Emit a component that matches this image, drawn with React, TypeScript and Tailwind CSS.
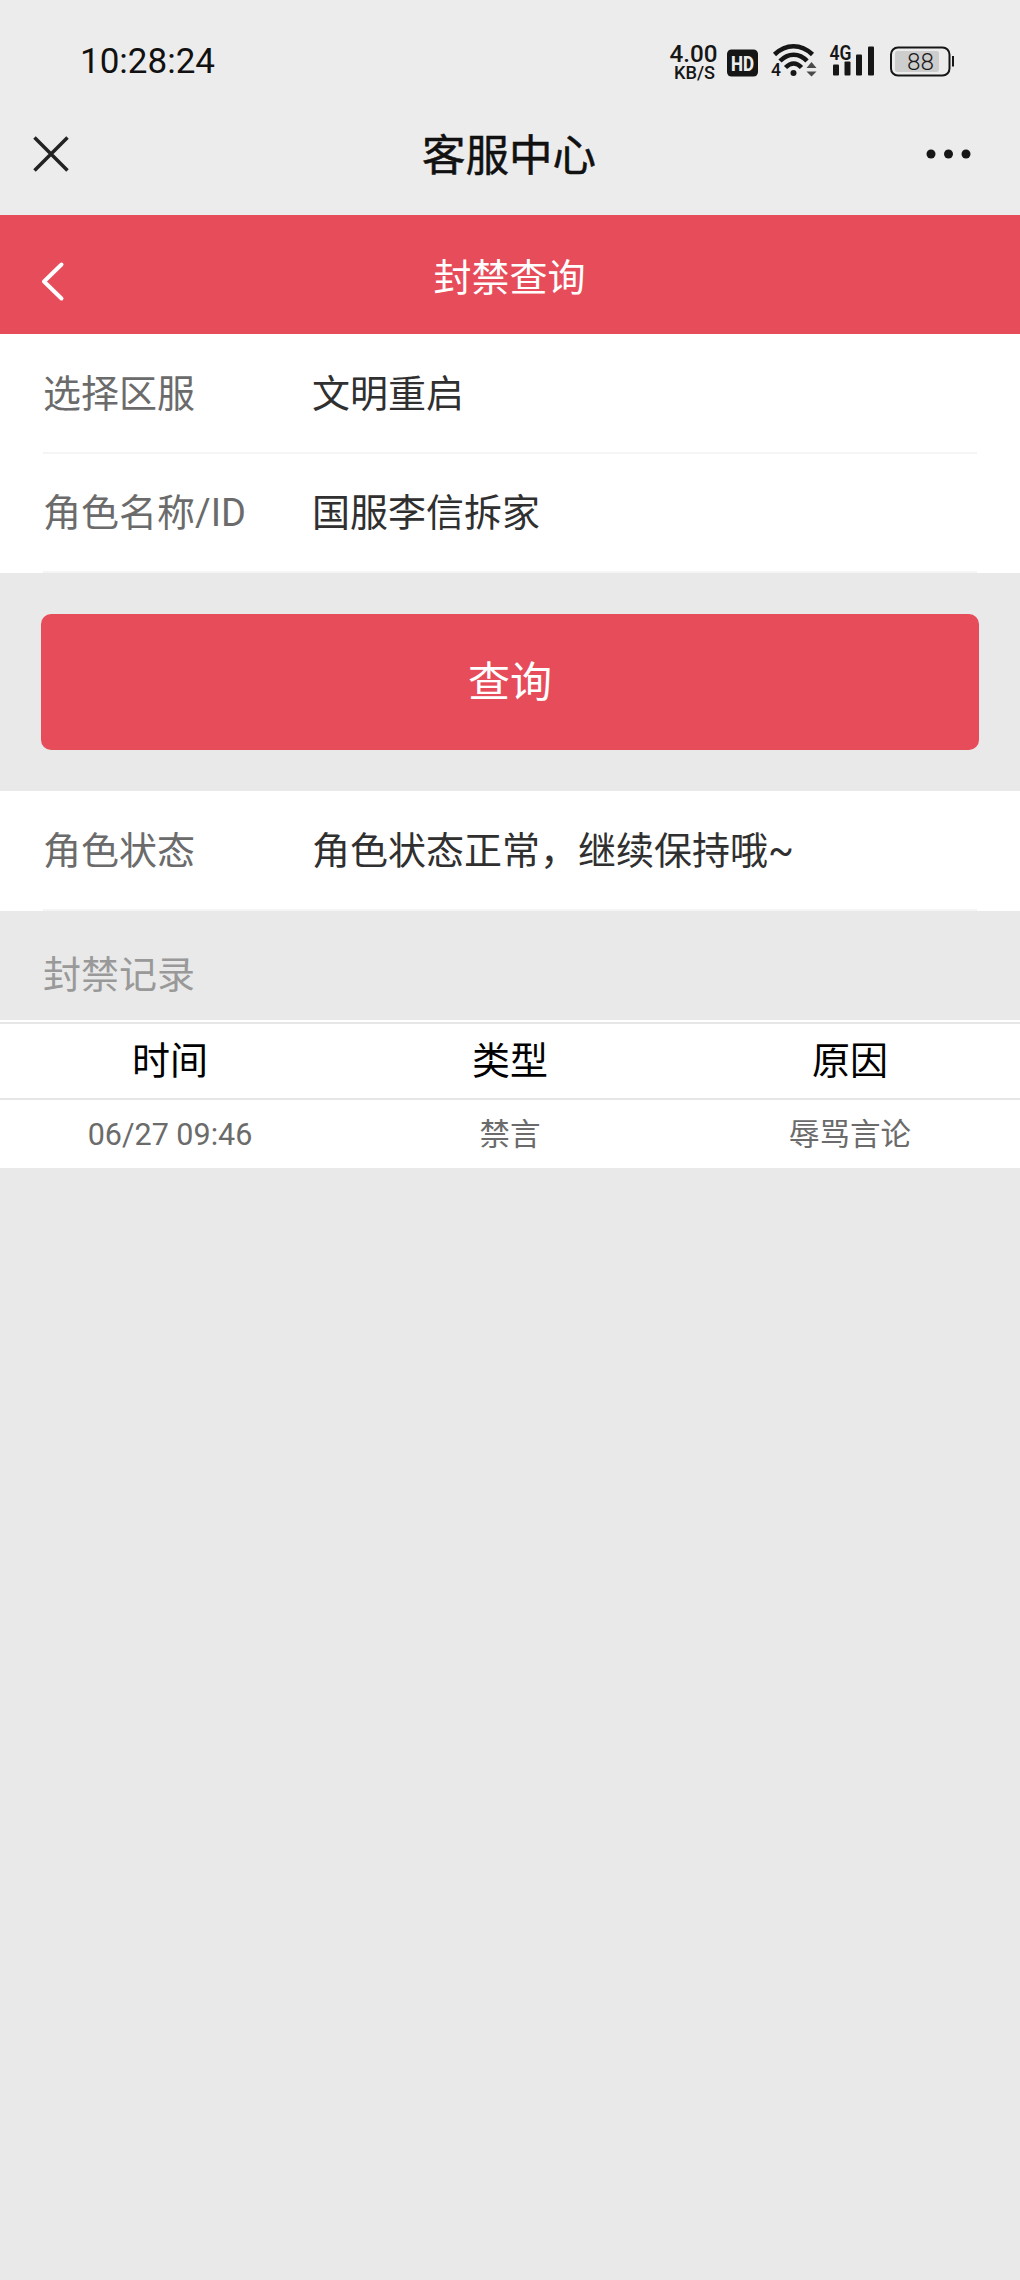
import type { ReactNode } from 'react';

interface BanRecord {
  time: string;
  type: string;
  reason: string;
}

const records: BanRecord[] = [{ time: '06/27 09:46', type: '禁言', reason: '辱骂言论' }];

function NetSpeed() {
  return (
    <div className="flex w-[52px] shrink-0 flex-col items-center font-medium text-[#161616]">
      <svg width="52" height="22" viewBox="0 0 52 22" className="overflow-visible" fill="currentColor">
        <text x="0.500" y="21" fontSize="23" textLength="48" lengthAdjust="spacingAndGlyphs">4.00</text>
      </svg>
      <svg width="52" height="18" viewBox="0 0 52 18" className="overflow-visible" fill="currentColor">
        <text x="5" y="15.500" fontSize="17.500" textLength="41" lengthAdjust="spacingAndGlyphs">KB/S</text>
      </svg>
    </div>
  );
}

function HdBadge() {
  return (
    <svg width="31" height="40" viewBox="0 0 31 40" className="shrink-0 overflow-visible">
      <rect x="0" y="8.500" width="31" height="27" rx="4.500" fill="#161616" />
      <text x="4" y="29.500" fontSize="21" fontWeight="800" fill="#ececec" textLength="23" lengthAdjust="spacingAndGlyphs">HD</text>
    </svg>
  );
}

function WifiIcon() {
  return (
    <svg width="46" height="40" viewBox="0 0 46 40" className="shrink-0 overflow-visible" fill="#161616">
      <g fill="none" stroke="#161616" strokeWidth="4.500">
        <path d="M2.500 13.500C14 2.500 29 2.500 40.500 13.500" />
        <path d="M8 20C16 11.500 27.500 11.500 35 20" />
        <path d="M13.500 26.500C19 21 24.500 21 29.500 26.500" />
      </g>
      <circle cx="21.500" cy="32" r="3" />
      <text x="-1" y="34.500" fontSize="17.500" fontWeight="500">4</text>
      <path d="M39.500 21l5 6h-10zM39.500 35.500l-5-5h10z" fill="#4a4a4a" />
    </svg>
  );
}

function SignalIcon() {
  return (
    <svg width="46" height="40" viewBox="0 0 46 40" className="shrink-0 overflow-visible" fill="#161616">
      <text x="-0.500" y="18.500" fontSize="19.500" fontWeight="600" textLength="22" lengthAdjust="spacingAndGlyphs">4G</text>
      <rect x="3" y="23.500" width="6" height="11" rx="1" />
      <rect x="14.500" y="20.500" width="6" height="14" rx="1" />
      <rect x="26" y="13.500" width="6" height="21" rx="1" />
      <rect x="38" y="5.500" width="6" height="29" rx="1" />
    </svg>
  );
}

function BatteryIcon() {
  return (
    <svg width="66" height="40" viewBox="0 0 66 40" className="shrink-0">
      <rect x="1" y="6.500" width="58.500" height="28" rx="7" fill="none" stroke="#161616" strokeWidth="2" />
      <rect x="5" y="10" width="44" height="21" rx="2.500" fill="#cdcdcd" />
      <text x="17" y="29" fontSize="24" fontWeight="300" fill="#1c1c1c" textLength="27" lengthAdjust="spacingAndGlyphs">88</text>
      <rect x="62" y="15" width="2" height="10.500" fill="#161616" />
    </svg>
  );
}

function InfoRow({ label, children }: { label: string; children: ReactNode }) {
  return (
    <div className="bg-white px-[43px]">
      <div className="flex h-[119.500px] items-center border-b-2 border-[#f5f5f5] pt-0.5 text-[38px] leading-none">
        <span className="w-[269px] shrink-0 text-[#6b6b6b]">{label}</span>
        <span className="text-[#303030]">{children}</span>
      </div>
    </div>
  );
}

export default function App() {
  return (
    <div className="min-h-[2280px] w-[1020px] bg-[#e9e9e9] font-[Roboto,'Noto_Sans_CJK_SC',sans-serif]">
      {/* Status bar and page title */}
      <header className="h-[215px] bg-[#ececec]">
        <div className="flex h-[121px] items-center justify-between pr-[64px] pl-[80px]">
          <span className="pt-0.5 text-[35px] leading-none text-[#111]">10:28:24</span>
          <div className="flex items-center">
            <NetSpeed />
            <div className="ml-[6px] flex items-center gap-[14px]">
              <HdBadge />
              <WifiIcon />
            </div>
            <div className="ml-3 flex items-center gap-3.5">
              <SignalIcon />
              <BatteryIcon />
            </div>
          </div>
        </div>
        <div className="flex h-[66px] items-center justify-between pr-[48px] pl-[33px]">
          <svg width="36" height="36" viewBox="0 0 36 36" fill="none" stroke="#222" strokeWidth="3.500">
            <path d="M1.500 1.500l33 33M34.500 1.500l-33 33" />
          </svg>
          <h1 className="pt-[5px] pl-[23px] text-[43.500px] leading-none text-[#111] [-webkit-text-stroke:0.5px]">客服中心</h1>
          <svg width="46" height="12" viewBox="0 0 46 12" fill="#161616">
            <circle cx="5" cy="6" r="4.500" />
            <circle cx="22.500" cy="6" r="4.500" />
            <circle cx="40" cy="6" r="4.500" />
          </svg>
        </div>
      </header>

      {/* Red nav bar */}
      <nav className="flex h-[119px] items-center bg-[#e74c5a] px-10 text-white">
        <svg width="26" height="42" viewBox="0 0 26 42" fill="none" stroke="currentColor" strokeWidth="4" strokeLinecap="round" strokeLinejoin="round" className="mt-3.5">
          <path d="M21.500 3.500L4 20.500l17.500 17" />
        </svg>
        <h2 className="flex-1 pt-1.5 pr-[27px] text-center text-[38px] leading-none">封禁查询</h2>
      </nav>

      <InfoRow label="选择区服">文明重启</InfoRow>
      <InfoRow label="角色名称/ID">国服李信拆家</InfoRow>

      <div className="px-[41px] py-[41px]">
        <button className="block h-[136px] w-full rounded-[10px] bg-[#e74c5a] pt-0.5 text-[42px] leading-none text-white">查询</button>
      </div>

      <InfoRow label="角色状态">角色状态正常，继续保持哦~</InfoRow>

      <div className="flex h-[109px] items-center px-[43px] pt-5 text-[38px] leading-none text-[#999]">封禁记录</div>

      {/* Ban records */}
      <section className="border-t-2 border-white bg-white text-center">
        <div className="grid h-[78px] grid-cols-3 items-center border-y-2 border-[#e6e6e6] text-[38px] leading-none text-black">
          <span>时间</span>
          <span>类型</span>
          <span>原因</span>
        </div>
        {records.map((r) => (
          <div key={r.time} className="grid h-[68px] grid-cols-3 items-center pt-1 text-[30.500px] leading-none text-[#6b6b6b]">
            <span>{r.time}</span>
            <span>{r.type}</span>
            <span>{r.reason}</span>
          </div>
        ))}
      </section>
    </div>
  );
}
